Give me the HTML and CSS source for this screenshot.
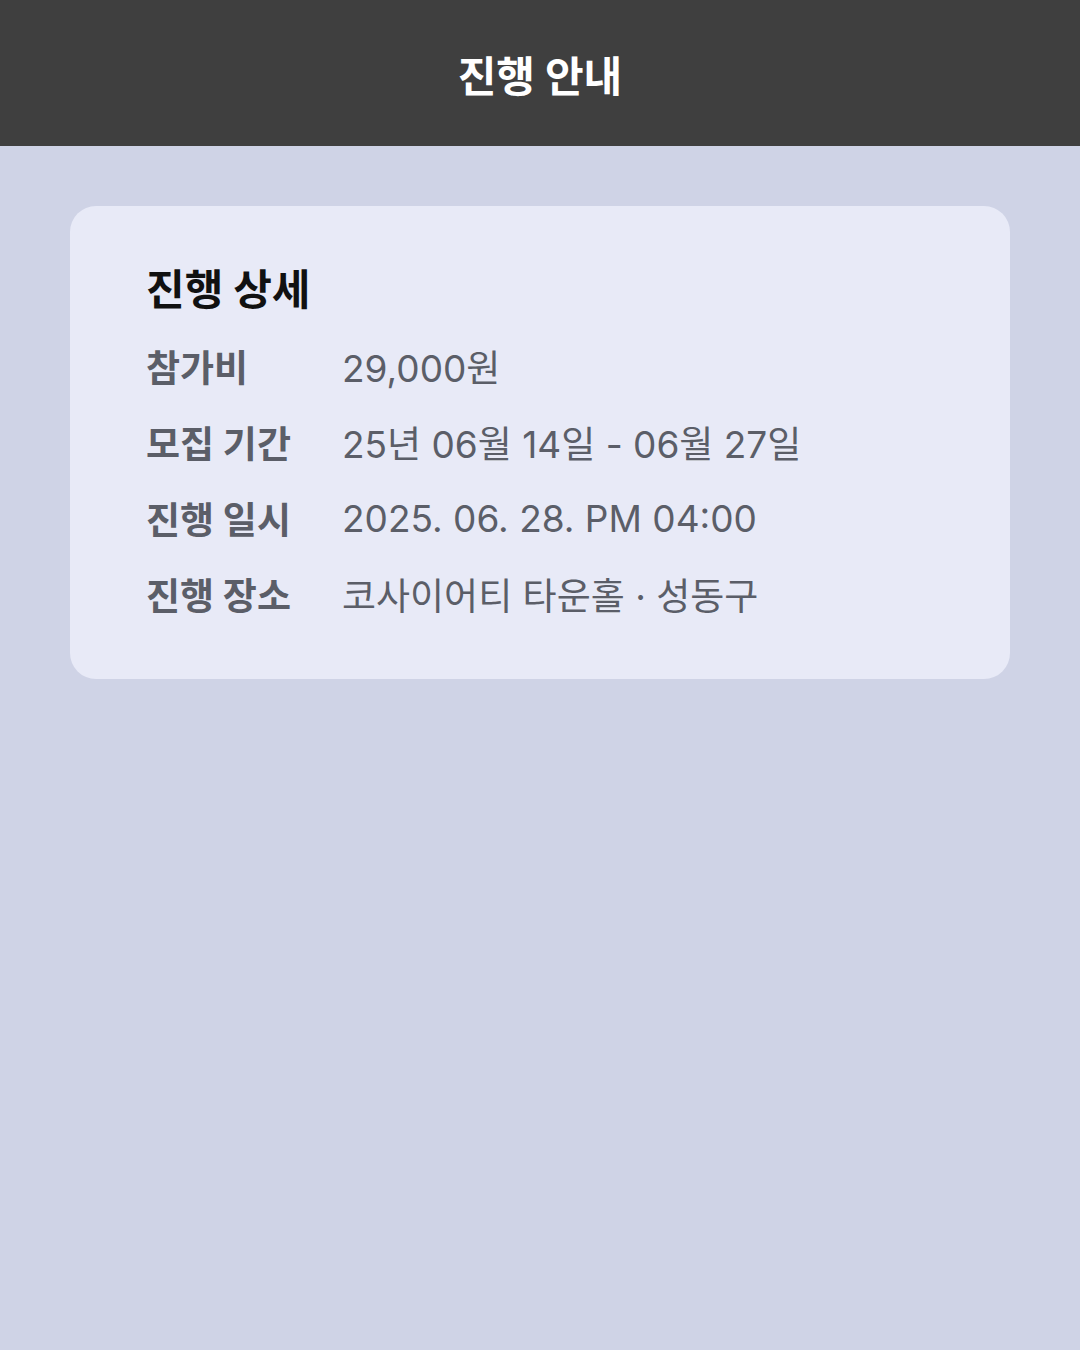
FILE: index.html
```html
<!DOCTYPE html>
<html lang="ko">
<head>
  <meta charset="UTF-8">
  <meta name="viewport" content="width=device-width, initial-scale=1.0">
  <title>진행 안내</title>
  <link rel="stylesheet" href="styles.css">
</head>
<body>
  <header class="top-bar">
    <h1>진행 안내</h1>
  </header>

  <main class="content">
    <section class="detail-card">
      <h2>진행 상세</h2>
      <dl class="detail-list">
        <div class="detail-row">
          <dt>참가비</dt>
          <dd>29,000원</dd>
        </div>
        <div class="detail-row">
          <dt>모집 기간</dt>
          <dd>25년 06월 14일 - 06월 27일</dd>
        </div>
        <div class="detail-row">
          <dt>진행 일시</dt>
          <dd>2025. 06. 28. PM 04:00</dd>
        </div>
        <div class="detail-row">
          <dt>진행 장소</dt>
          <dd>코사이어티 타운홀 · 성동구</dd>
        </div>
      </dl>
    </section>
  </main>
</body>
</html>
```

FILE: styles.css
```css
body {
  margin: 0;
  min-height: 1350px;
  font-family: Inter, "Noto Sans CJK KR", sans-serif;
  background-color: #cfd3e6;
}

.top-bar {
  height: 146px;
  display: flex;
  align-items: center;
  justify-content: center;
  background-color: #3f3f3f;
}

.top-bar h1 {
  margin: 0;
  color: #ffffff;
  font-size: 42px;
  font-weight: 700;
}

.content {
  padding: 60px 70px;
}

.detail-card {
  padding: 54px 76px 47px;
  background-color: #e8eaf7;
  border-radius: 26px;
}

.detail-card h2 {
  margin: 0 0 8px;
  font-size: 42px;
  font-weight: 700;
  line-height: 60px;
  color: #111111;
}

.detail-list {
  margin: 0;
}

.detail-row {
  display: flex;
  height: 76px;
  align-items: center;
  font-size: 37px;
  color: #5b5e68;
}

.detail-row dt {
  width: 196px;
  flex-shrink: 0;
  font-weight: 700;
}

.detail-row dd {
  margin: 0;
  font-weight: 400;
}
```
